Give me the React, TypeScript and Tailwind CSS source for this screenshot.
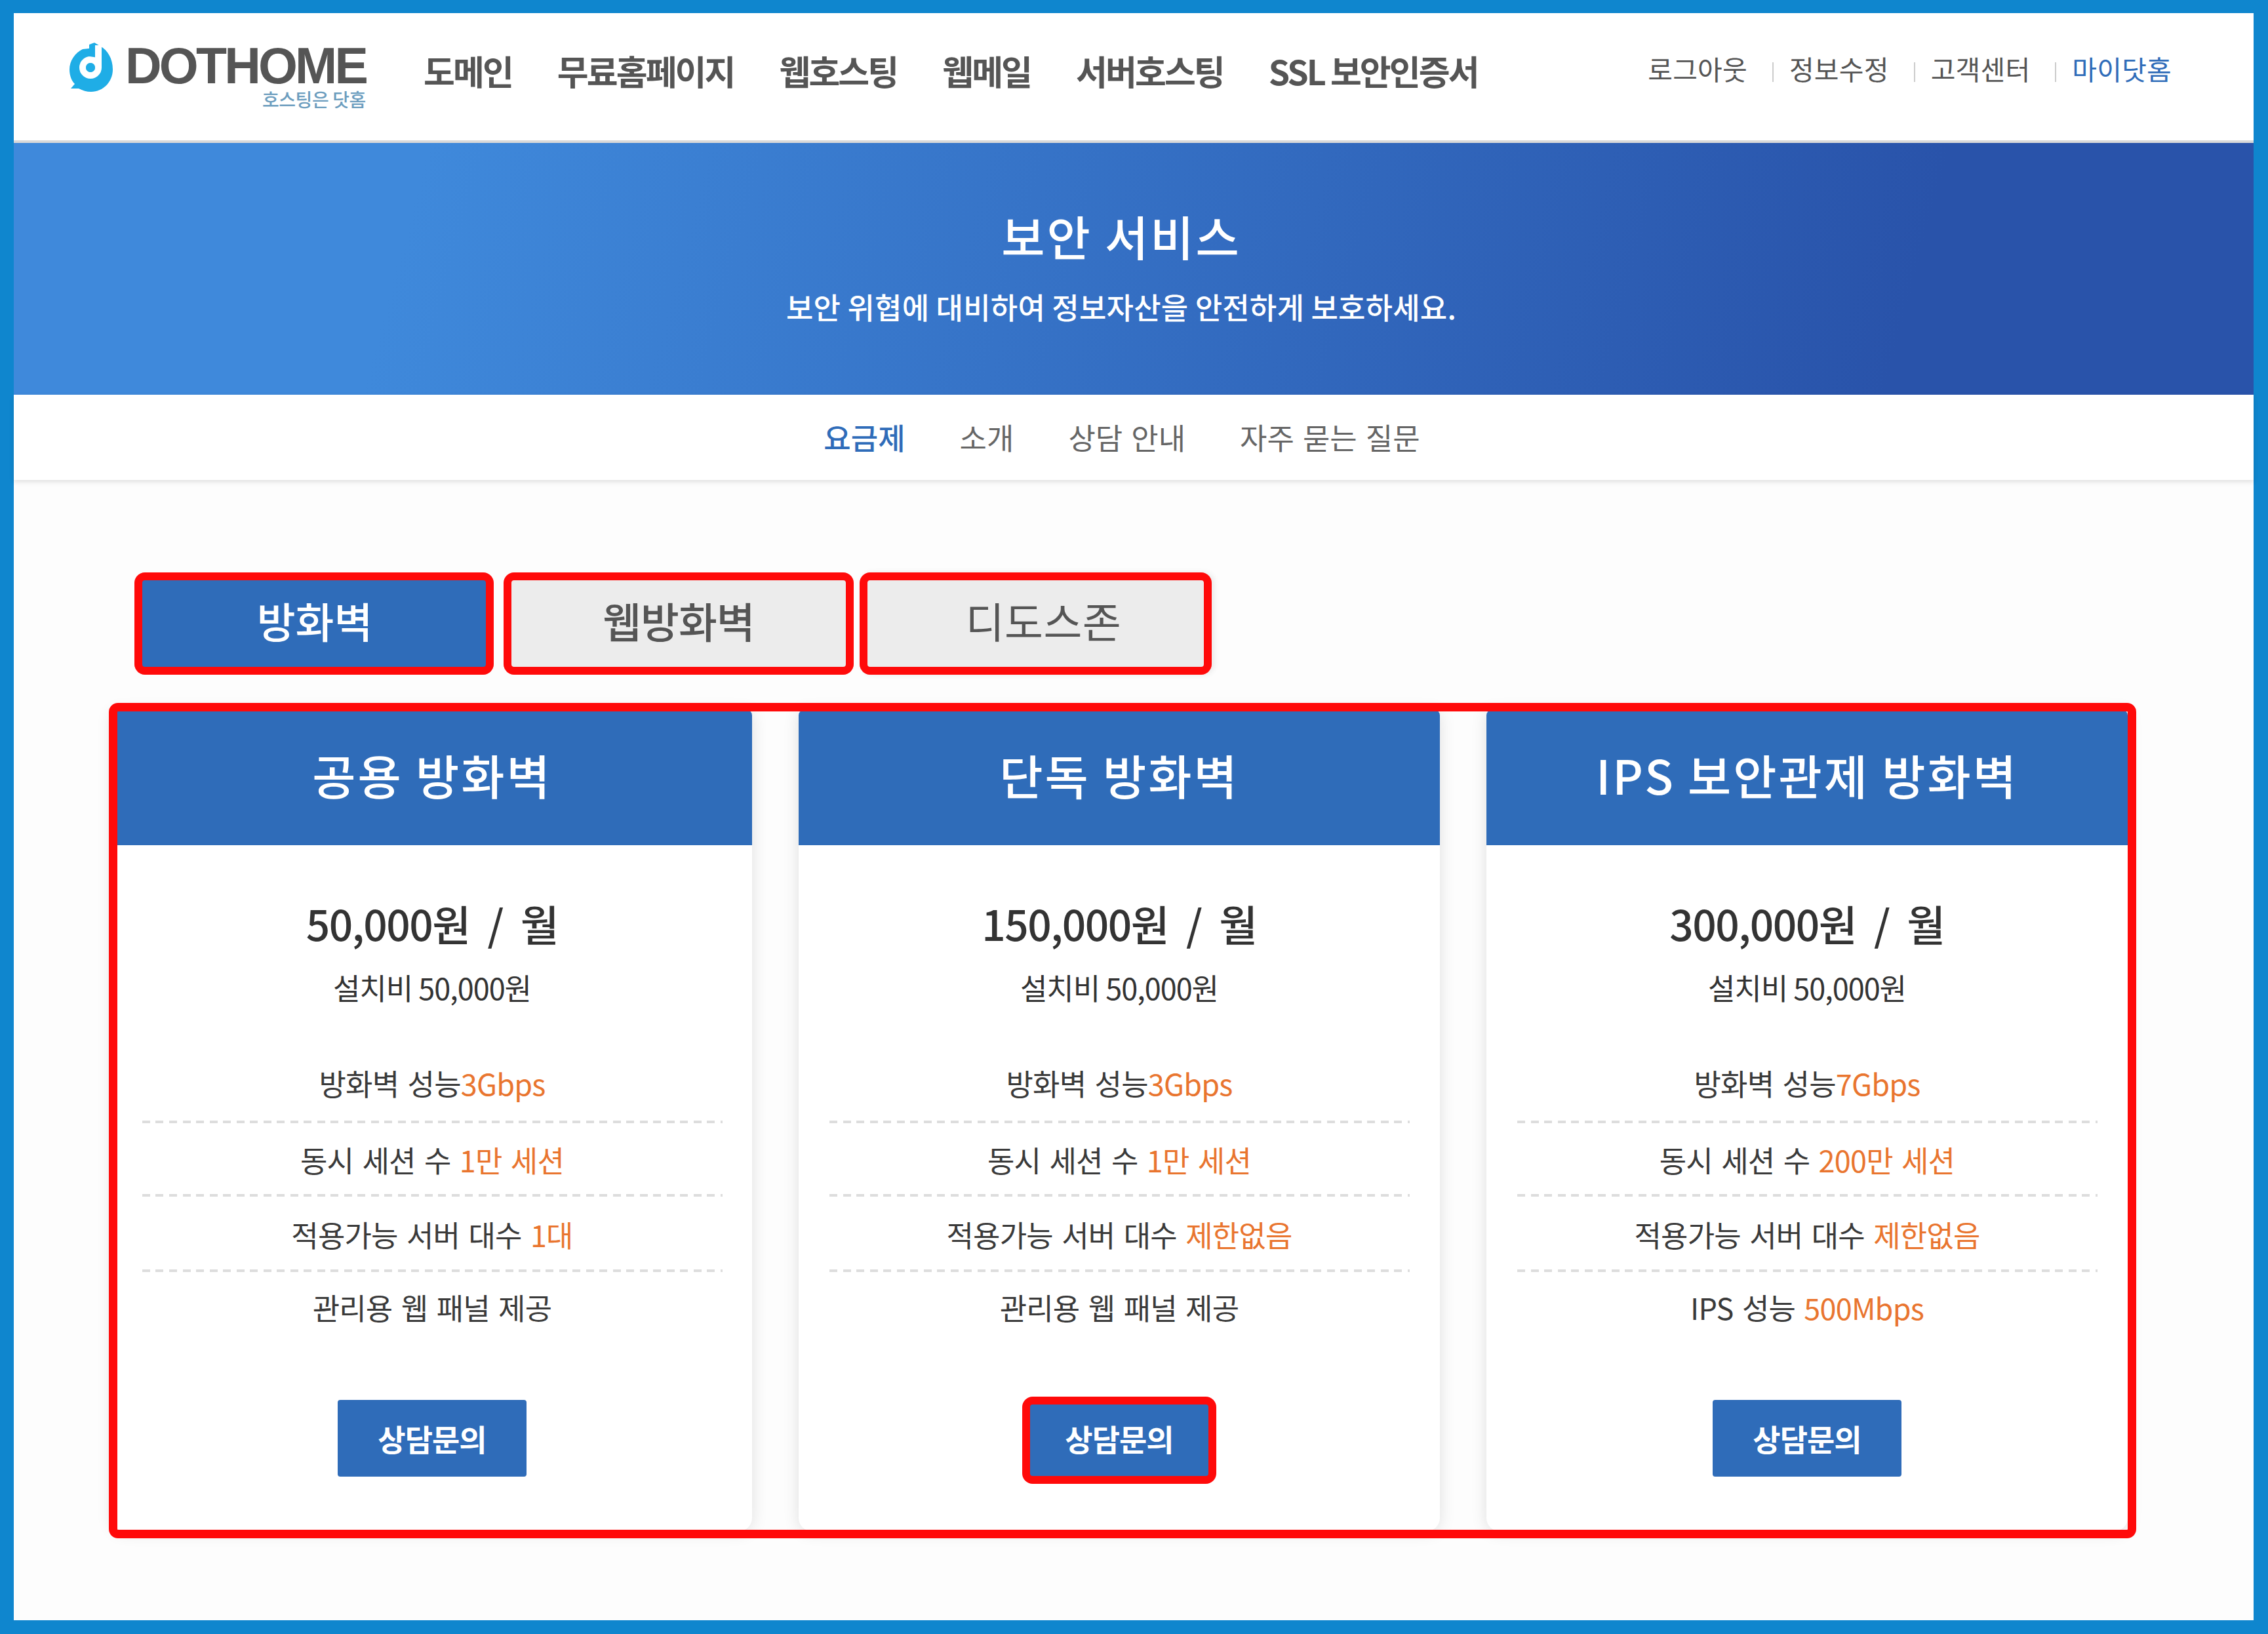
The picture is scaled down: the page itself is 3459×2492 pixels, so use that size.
import React from 'react';

const nav = ['도메인', '무료홈페이지', '웹호스팅', '웹메일', '서버호스팅', 'SSL 보안인증서'];
const rowHeights = ['h-[122px]', 'h-[112px]', 'h-[115px]', 'h-[108px]'];

type Row = { label: string; value: string };
type Plan = { title: string; price: string; width: string; rows: Row[]; marked?: boolean };

const plans: Plan[] = [
  {
    title: '공용 방화벽',
    price: '50,000원 / 월',
    width: 'w-[976px]',
    rows: [
      { label: '방화벽 성능', value: '3Gbps' },
      { label: '동시 세션 수 ', value: '1만 세션' },
      { label: '적용가능 서버 대수 ', value: '1대' },
      { label: '관리용 웹 패널 제공', value: '' },
    ],
  },
  {
    title: '단독 방화벽',
    price: '150,000원 / 월',
    width: 'w-[978px]',
    marked: true,
    rows: [
      { label: '방화벽 성능', value: '3Gbps' },
      { label: '동시 세션 수 ', value: '1만 세션' },
      { label: '적용가능 서버 대수 ', value: '제한없음' },
      { label: '관리용 웹 패널 제공', value: '' },
    ],
  },
  {
    title: 'IPS 보안관제 방화벽',
    price: '300,000원 / 월',
    width: 'w-[978px]',
    rows: [
      { label: '방화벽 성능', value: '7Gbps' },
      { label: '동시 세션 수 ', value: '200만 세션' },
      { label: '적용가능 서버 대수 ', value: '제한없음' },
      { label: 'IPS 성능 ', value: '500Mbps' },
    ],
  },
];

function LogoMark() {
  return (
    <svg width="67" height="75" viewBox="0 0 67 75" className="shrink-0">
      <path d="M38 0 L38 8 L20 10 C8 16 0 28 0 41 C0 50 3 58 8 63 L2 70 L14 70 C20 73 26 75 33 75 C51 75 66 60 66 41 C66 24 58 12 48 6 L38 0 Z" fill="#1fade6" />
      <rect x="39" y="4" width="10" height="34" fill="#ffffff" />
      <circle cx="32" cy="38" r="12" fill="none" stroke="#ffffff" strokeWidth="10" />
      <circle cx="32" cy="38" r="7" fill="#1fade6" />
      <path d="M38 0 L38 22 L30 21 L30 3 Z" fill="#1fade6" />
    </svg>
  );
}

function Header() {
  return (
    <header className="h-[198px] shrink-0 flex items-start bg-white border-b-[4px] border-[#d9d9d9] text-[#555]">
      <div className="ml-[85px] mt-[45px] flex items-start gap-[18px] w-[451px] shrink-0">
        <LogoMark />
        <div className="flex flex-col items-end">
          <div className="font-['Liberation_Sans',sans-serif] font-bold text-[77px] leading-[70px] tracking-[-3.8px] text-[#555] whitespace-nowrap">DOTHOME</div>
          <div className="text-[28px] leading-[32px] tracking-[-0.4px] text-[#6c9dbe] font-medium whitespace-nowrap">호스팅은 닷홈</div>
        </div>
      </div>
      <nav className="ml-[89px] mt-[55px] flex gap-[69px]">
        {nav.map((n) => (
          <span key={n} className="text-[52px] leading-[66px] font-semibold tracking-[-2.9px] whitespace-nowrap">{n}</span>
        ))}
      </nav>
      <div className="ml-auto mr-[125px] mt-[54px] flex items-center text-[41px] leading-[60px] tracking-[0.2px] whitespace-nowrap">
        <span>로그아웃</span>
        <span className="w-[2px] h-[30px] mt-[12px] ml-[38px] mr-[24px] bg-[#cccccc]" />
        <span>정보수정</span>
        <span className="w-[2px] h-[30px] mt-[12px] ml-[38px] mr-[24px] bg-[#cccccc]" />
        <span>고객센터</span>
        <span className="w-[2px] h-[30px] mt-[12px] ml-[38px] mr-[24px] bg-[#cccccc]" />
        <span className="text-[#2f6cb9]">마이닷홈</span>
      </div>
    </header>
  );
}

function Hero() {
  return (
    <section className="h-[384px] shrink-0 flex flex-col items-center pr-[38px] text-white bg-[linear-gradient(105deg,#3f89db_18%,#2953aa_84%)]">
      <h1 className="mt-[96px] text-[72px] leading-[90px] font-medium tracking-[3px] whitespace-nowrap">보안 서비스</h1>
      <p className="mt-[34px] text-[45px] leading-[60px] tracking-[0.2px] font-medium whitespace-nowrap">보안 위협에 대비하여 정보자산을 안전하게 보호하세요.</p>
    </section>
  );
}

function SubNav() {
  return (
    <div className="relative h-[130px] shrink-0 pr-[36px] bg-white flex items-center justify-center gap-[83px] text-[45px] [word-spacing:3px] text-[#666] shadow-[0_3px_7px_rgba(0,0,0,0.12)] whitespace-nowrap">
      <span className="text-[#2f6cb9] font-medium">요금제</span>
      <span>소개</span>
      <span>상담 안내</span>
      <span>자주 묻는 질문</span>
    </div>
  );
}

function Tabs() {
  return (
    <div className="ml-[184px] mt-[141px] flex text-[64px] leading-none">
      <button className="w-[548px] h-[156px] flex items-center justify-center rounded-[16px] border-[12px] border-[#ff0a0a] bg-[#2f6cb9] text-white font-medium pb-[12px] pl-[2px]">방화벽</button>
      <button className="ml-[15px] w-[534px] h-[156px] flex items-center justify-center rounded-[16px] border-[12px] border-[#ff0a0a] bg-[#ececec] text-[#555] font-medium pb-[12px] tracking-[-1px]">웹방화벽</button>
      <button className="ml-[9px] w-[537px] h-[156px] flex items-center justify-center rounded-[16px] border-[12px] border-[#ff0a0a] bg-[#ececec] text-[#555] pb-[12px] pl-[24px] tracking-[0.5px] shadow-[4px_0_8px_rgba(0,0,0,0.08)]">디도스존</button>
    </div>
  );
}

function Card({ plan }: { plan: Plan }) {
  return (
    <article className={`${plan.width} h-[1252px] shrink-0 flex flex-col items-center bg-white rounded-t-[8px] rounded-b-[20px] overflow-visible shadow-[0_2px_24px_rgba(0,0,0,0.12)]`}>
      <h2 className="w-full h-[206px] shrink-0 flex items-center justify-center bg-[#2f6cb9] rounded-t-[8px] text-white text-[72px] font-medium tracking-[3px] whitespace-nowrap pb-[10px]">
        {plan.title}
      </h2>
      <div className="mt-[80px] text-[64px] leading-[76px] font-medium tracking-[-1.5px] [word-spacing:14px] text-[#333] whitespace-nowrap">{plan.price}</div>
      <div className="mt-[32px] text-[45px] leading-[58px] tracking-[-1px] text-[#333] whitespace-nowrap">설치비 50,000원</div>
      <ul className="mt-[56px] w-[885px] text-[45px] leading-[60px] tracking-[-0.8px] [word-spacing:4px] text-[#3a3a3a]">
        {plan.rows.map((r, i) => (
          <li key={i} className={`${rowHeights[i]} relative flex items-center justify-center whitespace-pre`}>
            <span>{r.label}</span>
            {r.value && <span className="text-[#e9752f]">{r.value}</span>}
            {i < 3 && (
              <span className="absolute left-0 right-0 bottom-0 h-[4px] bg-[repeating-linear-gradient(90deg,#dddddd_0,#dddddd_12px,transparent_12px,transparent_20.5px)]" />
            )}
          </li>
        ))}
      </ul>
      <button className="relative mt-[87px] w-[288px] h-[117px] flex items-center justify-center rounded-[4px] bg-[#2f6cb9] text-white text-[46px] font-semibold tracking-[-1px]">
        상담문의
        {plan.marked && (
          <span className="absolute -left-[4px] -right-[4px] -top-[5px] -bottom-[11px] rounded-[16px] border-[12px] border-[#ff0a0a]" />
        )}
      </button>
    </article>
  );
}

function Plans() {
  return (
    <div className="relative ml-[150px] mt-[54px] w-[3075px] flex gap-[71px]">
      {plans.map((p) => (
        <Card key={p.title} plan={p} />
      ))}
      <span className="absolute -left-[5px] -right-[12px] -top-[11px] -bottom-[11px] rounded-[14px] border-[13px] border-[#ff0a0a] pointer-events-none" />
    </div>
  );
}

export default function App() {
  return (
    <div className="w-[3459px] h-[2492px] overflow-hidden pt-[20px] pl-[21px] pr-[22px] pb-[21px] bg-[#0f86ce] font-['Noto_Sans_CJK_KR','Noto_Sans',sans-serif]">
      <div className="h-full flex flex-col bg-[#fdfdfd]">
        <Header />
        <Hero />
        <SubNav />
        <Tabs />
        <Plans />
      </div>
    </div>
  );
}
